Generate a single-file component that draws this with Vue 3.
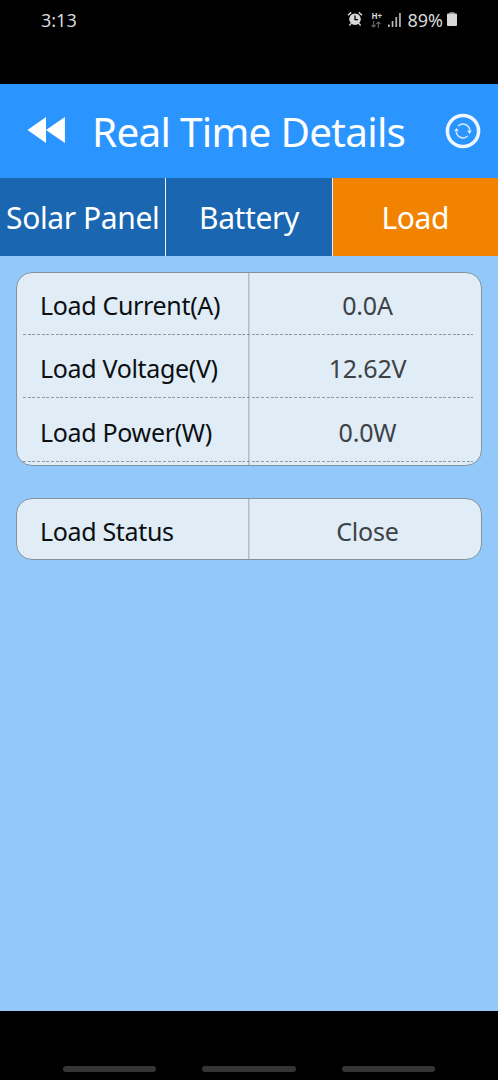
<template>
  <div class="phone">
    <div class="status-bar">
      <span class="clock">3:13</span>
      <div class="status-icons">
        <svg class="alarm" viewBox="0 0 16 16" width="16" height="16">
          <path d="M1 4.2 4.2 1.4M15 4.2 11.8 1.4M4 12.6 2.4 14.4M12 12.6l1.6 1.8" fill="none" stroke="#d8d8d8" stroke-width="1.5" />
          <circle cx="8" cy="8.2" r="5.8" fill="#d8d8d8" />
          <path d="M8 4.6v4h3" fill="none" stroke="#000" stroke-width="1.3" />
        </svg>
        <div class="network">
          <span>H+</span>
          <svg viewBox="0 0 10 7" width="10" height="7">
            <path d="M2.6 0v6M0.6 4l2 2 2-2M7.4 7V1M5.4 3l2-2 2 2" fill="none" stroke="#666" stroke-width="1.1" />
          </svg>
        </div>
        <svg class="signal" viewBox="0 0 13 14" width="13" height="14">
          <path d="M0 11.5h1.7V14H0zM3.7 8h1.7v6H3.7zM7.4 4h1.7v10H7.4zM11.1 0h1.7v14h-1.7z" fill="#b8b8b8" />
        </svg>
        <span class="percent">89%</span>
        <svg class="battery" viewBox="0 0 10 14" width="10" height="14">
          <path d="M2.5 0h5v2h-5z" fill="#777" />
          <rect x="0" y="1.6" width="10" height="12.4" rx="1" fill="#d8d8d8" />
        </svg>
      </div>
    </div>

    <div class="header">
      <button class="back-btn" aria-label="Back">
        <svg viewBox="0 0 38 26" width="38" height="26">
          <path d="M0.5 13 19 0v26zM19 13 37.9 0v26z" fill="#fff" />
        </svg>
      </button>
      <h1>Real Time Details</h1>
      <button class="refresh-btn" aria-label="Refresh">
        <svg viewBox="0 0 36 36" width="36" height="36">
          <circle cx="18" cy="18" r="15.6" fill="none" stroke="#eef6ff" stroke-width="3.5" />
          <path d="M13.2 12.9a7 7 0 0 1 11.6 4.2M22.8 23.1a7 7 0 0 1-11.6-4.2" fill="none" stroke="#d5e9ff" stroke-width="1.4" />
          <path d="M22.1 17.5h4.7l-2.3 3.4zM9.2 18.3h4.7l-2.4-3.4z" fill="#e4f1ff" />
        </svg>
      </button>
    </div>

    <div class="tabs">
      <button
        v-for="tab in tabs"
        :key="tab"
        class="tab"
        :class="{ active: tab === currentTab }"
        @click="currentTab = tab"
      >
        {{ tab }}
      </button>
    </div>

    <div class="content">
      <div class="card">
        <div v-for="item in details" :key="item.label" class="row dashed">
          <div class="label">{{ item.label }}</div>
          <div class="value">{{ item.value }}</div>
        </div>
      </div>
      <div class="card status-card">
        <div class="row">
          <div class="label">Load Status</div>
          <div class="value">Close</div>
        </div>
      </div>
    </div>

    <div class="nav-bar">
      <span v-for="n in 3" :key="n" class="nav-hint"></span>
    </div>
  </div>
</template>

<script setup>
import { ref } from 'vue'

const tabs = ['Solar Panel', 'Battery', 'Load']
const currentTab = ref('Load')

const details = ref([
  { label: 'Load Current(A)', value: '0.0A' },
  { label: 'Load Voltage(V)', value: '12.62V' },
  { label: 'Load Power(W)', value: '0.0W' }
])
</script>

<style>
body {
  margin: 0;
  background: #000;
}
</style>

<style scoped>
.phone {
  display: flex;
  flex-direction: column;
  width: 498px;
  height: 1080px;
  overflow: hidden;
  background: #000;
  font-family: 'Noto Sans', sans-serif;
}

button {
  padding: 0;
  border: none;
  background: none;
  font-family: inherit;
  cursor: pointer;
}

svg {
  display: block;
}

.status-bar {
  display: flex;
  justify-content: space-between;
  box-sizing: border-box;
  height: 84px;
  padding: 7px 41px 0;
  color: #d8d8d8;
  font-size: 18px;
  line-height: 26px;
}

.status-icons {
  display: flex;
  align-items: flex-start;
}

.alarm {
  margin-top: 4px;
}

.network {
  width: 10px;
  margin: 5px 7px 0 8px;
}

.network span {
  display: block;
  font-size: 8px;
  font-weight: 700;
  line-height: 7px;
}

.network svg {
  margin-top: 2px;
}

.signal {
  margin-top: 6px;
}

.percent {
  margin: 0 4px 0 6px;
}

.battery {
  margin-top: 5px;
}

.header {
  display: flex;
  align-items: center;
  height: 94px;
  background: #2b95ff;
}

.back-btn {
  margin: 0 0 2px 27px;
}

.header h1 {
  flex: 1;
  margin: 1px 0 0 27px;
  color: #fff;
  font-size: 40.5px;
  font-weight: 400;
  line-height: 56px;
  letter-spacing: -0.75px;
  white-space: nowrap;
}

.refresh-btn {
  margin-right: 17px;
}

.tabs {
  display: flex;
  height: 77.5px;
}

.tab {
  flex: 1 1 0;
  min-width: 0;
  padding-top: 3px;
  border-right: 1.5px solid #e8f3ff;
  background: #1a66b0;
  color: #fff;
  font-size: 30px;
  line-height: 42px;
  letter-spacing: -0.4px;
  white-space: nowrap;
}

.tab.active {
  border-right: none;
  background: #f18300;
}

.content {
  flex: 1;
  padding: 16px 16px 0;
  background: #93c8fa;
}

.card {
  box-sizing: border-box;
  height: 194px;
  margin-bottom: 32px;
  overflow: hidden;
  border: 1.5px solid #82929f;
  border-radius: 16px;
  background: linear-gradient(#b3bcc3, #b3bcc3) 231px 0 / 1.5px 100% no-repeat #e0ecf6;
}

.status-card {
  height: 62px;
}

.row {
  display: flex;
  height: 63.6px;
  font-size: 25px;
  line-height: 64px;
}

.dashed {
  background: repeating-linear-gradient(90deg, #8b9ba8 0 3px, transparent 3px 4.67px) 6px 61px / 450px 1px no-repeat;
}

.label,
.value {
  box-sizing: border-box;
  white-space: nowrap;
}

.label {
  width: 232px;
  padding-left: 23px;
  color: #0c0f12;
  letter-spacing: -0.33px;
}

.value {
  flex: 1;
  padding-left: 5px;
  color: #3d4246;
  letter-spacing: -0.2px;
  text-align: center;
}

.status-card .row {
  height: 60px;
}

.nav-bar {
  display: flex;
  align-items: flex-end;
  justify-content: center;
  gap: 46px;
  box-sizing: border-box;
  height: 69px;
  padding-bottom: 8px;
}

.nav-hint {
  width: 93.5px;
  height: 6px;
  border-radius: 3px;
  background: #353535;
}
</style>
